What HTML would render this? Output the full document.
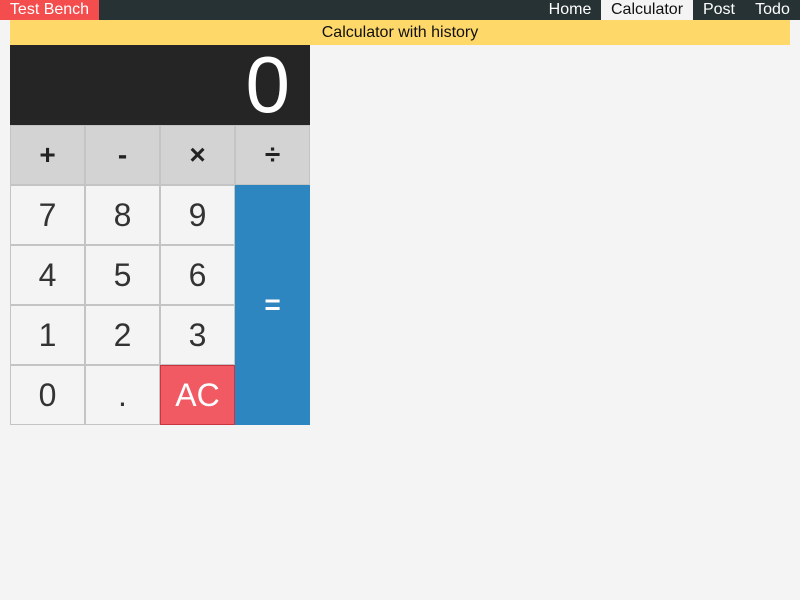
<!DOCTYPE html>
<html><head><style>
body{margin:0;background:#f4f4f4;font-family:"Liberation Sans",sans-serif;width:800px;height:600px;overflow:hidden;position:relative}
.hdr{position:absolute;left:0;top:0;width:800px;height:20px;background:#263233}
.brand{position:absolute;left:0;top:0;width:99px;height:20px;background:#f44d4d;color:#fff;font-size:16px;line-height:20px;text-align:center}
.nav{position:absolute;top:0;height:20px;line-height:20px;font-size:16px;color:#fff;text-align:center}
.nav.act{background:#f4f4f4;color:#111}
.bar{position:absolute;left:10px;top:20px;width:780px;height:25px;background:#ffd86a;text-align:center;line-height:25px;font-size:16px;color:#111}
.disp{position:absolute;left:10px;top:45px;width:300px;height:80px;background:#252525;color:#fff;font-size:80px;line-height:80px;text-align:right;box-sizing:border-box;padding-right:20px}
.b{position:absolute;width:75px;height:60px;box-sizing:border-box;border:1px solid #c4c4c4;background:#f4f4f4;color:#333;font-size:32px;text-align:center;line-height:58px}
.op{background:#d3d3d3;color:#222;font-size:28px;font-weight:bold}
.ac{background:#f25a63;border-color:#c9353e;color:#fff}
.eq{background:#2e86c1;border:none;color:#fff;font-size:28px;font-weight:bold}
</style></head><body>
<div class="hdr"></div>
<div class="brand">Test Bench</div>
<div class="nav" style="left:539px;width:62px">Home</div>
<div class="nav act" style="left:601px;width:92px">Calculator</div>
<div class="nav" style="left:693px;width:52px">Post</div>
<div class="nav" style="left:745px;width:55px">Todo</div>
<div class="bar">Calculator with history</div>
<div class="disp">0</div>
<div class="b op" style="left:10px;top:125px">+</div>
<div class="b op" style="left:85px;top:125px">-</div>
<div class="b op" style="left:160px;top:125px">×</div>
<div class="b op" style="left:235px;top:125px">÷</div>
<div class="b" style="left:10px;top:185px">7</div>
<div class="b" style="left:85px;top:185px">8</div>
<div class="b" style="left:160px;top:185px">9</div>
<div class="b" style="left:10px;top:245px">4</div>
<div class="b" style="left:85px;top:245px">5</div>
<div class="b" style="left:160px;top:245px">6</div>
<div class="b" style="left:10px;top:305px">1</div>
<div class="b" style="left:85px;top:305px">2</div>
<div class="b" style="left:160px;top:305px">3</div>
<div class="b" style="left:10px;top:365px">0</div>
<div class="b" style="left:85px;top:365px">.</div>
<div class="b ac" style="left:160px;top:365px">AC</div>
<div class="b eq" style="left:235px;top:185px;height:240px;line-height:240px">=</div>
</body></html>
